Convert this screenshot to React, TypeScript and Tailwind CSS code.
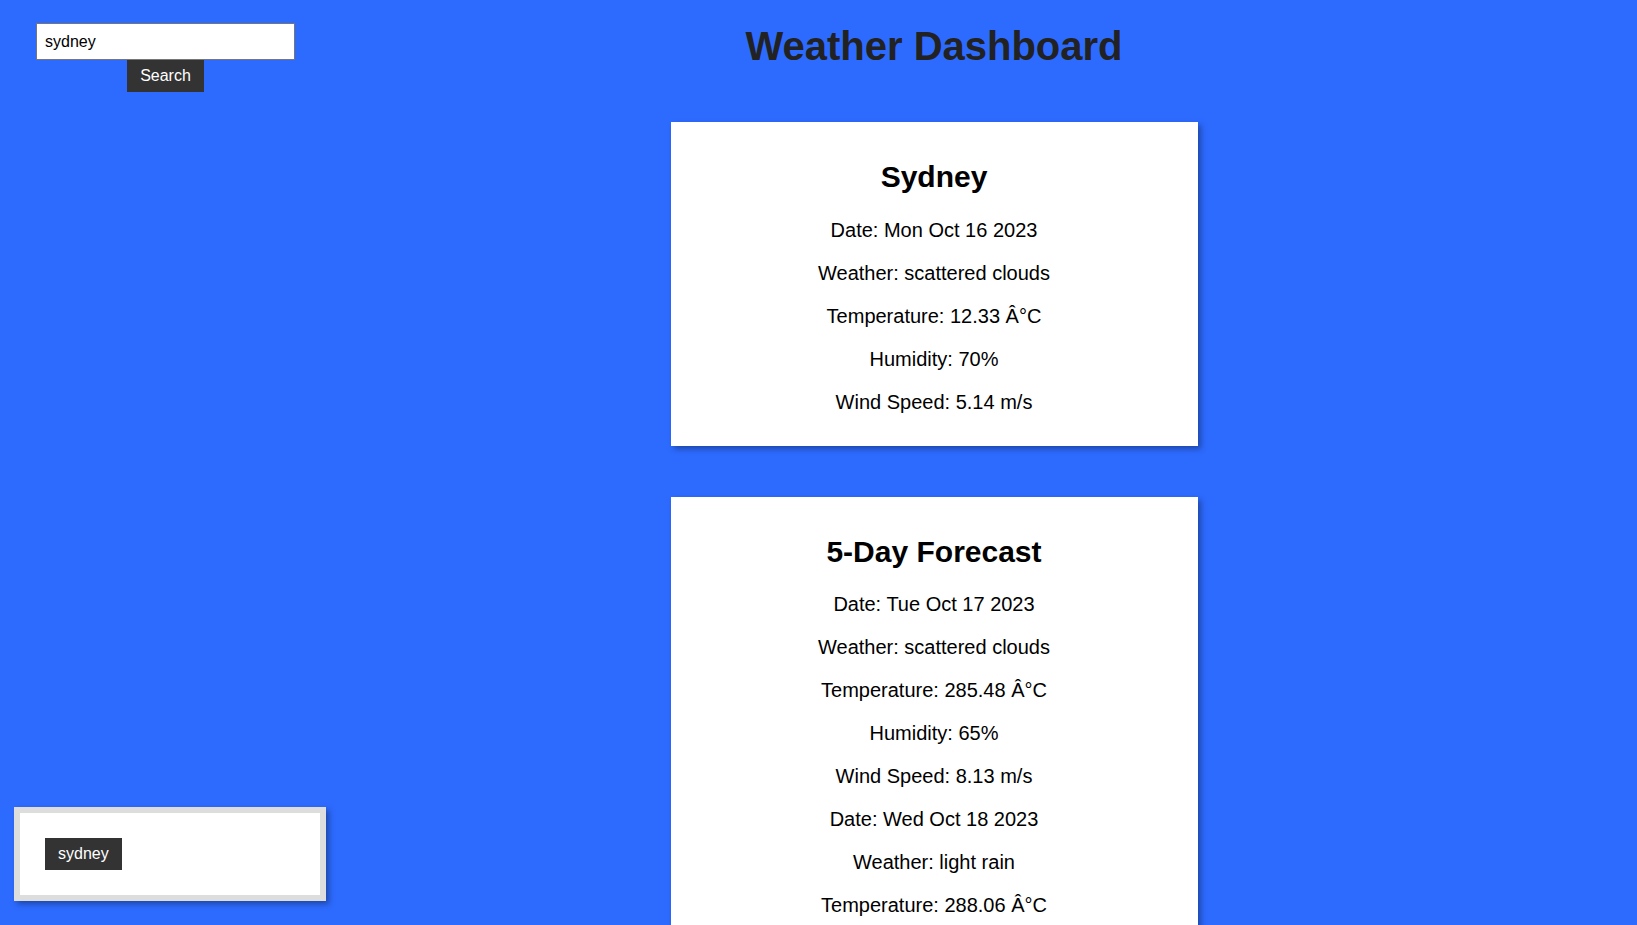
import React, { useState } from "react";

interface DayWeather {
  date: string;
  weather: string;
  temp: string;
  humidity: string;
  wind: string;
}

const current: DayWeather = {
  date: "Mon Oct 16 2023",
  weather: "scattered clouds",
  temp: "12.33",
  humidity: "70",
  wind: "5.14",
};

const forecast: DayWeather[] = [
  { date: "Tue Oct 17 2023", weather: "scattered clouds", temp: "285.48", humidity: "65", wind: "8.13" },
  { date: "Wed Oct 18 2023", weather: "light rain", temp: "288.06", humidity: "72", wind: "6.41" },
  { date: "Thu Oct 19 2023", weather: "overcast clouds", temp: "289.12", humidity: "68", wind: "4.37" },
  { date: "Fri Oct 20 2023", weather: "clear sky", temp: "291.55", humidity: "54", wind: "5.02" },
  { date: "Sat Oct 21 2023", weather: "few clouds", temp: "290.73", humidity: "60", wind: "7.28" },
];

const DayLines: React.FC<{ day: DayWeather }> = ({ day }) => (
  <>
    <p>Date: {day.date}</p>
    <p>Weather: {day.weather}</p>
    <p>Temperature: {day.temp} Â°C</p>
    <p>Humidity: {day.humidity}%</p>
    <p>Wind Speed: {day.wind} m/s</p>
  </>
);

const Card: React.FC<{ title: string; children: React.ReactNode }> = ({ title, children }) => (
  <div className="mx-auto w-[527px] bg-white pt-[38px] pb-[32px] text-center text-black shadow-[3px_3px_6px_rgba(0,0,0,0.35)]">
    <h2 className="text-[30px] font-bold leading-[34.5px]">{title}</h2>
    <div className="mt-[24px] flex flex-col gap-[20px] text-[20px] leading-[23px]">{children}</div>
  </div>
);

export default function App() {
  const [query, setQuery] = useState("sydney");
  const [history] = useState<string[]>(["sydney"]);

  return (
    <div
      className="flex h-screen overflow-hidden bg-[#2d6bff]"
      style={{ fontFamily: '"Liberation Sans", Arial, sans-serif' }}
    >
      {/* sidebar: search on top, history at the bottom */}
      <aside className="flex h-[925px] w-[331px] shrink-0 flex-col justify-between">
        <div className="flex w-[295px] flex-col items-center pl-[36px] pt-[23px]">
          <input
            value={query}
            onChange={(e) => setQuery(e.target.value)}
            className="h-[37px] w-[259px] border border-[#767676] bg-white px-[8px] text-[16px] text-black outline-none"
          />
          <button className="bg-[#333333] px-[13px] py-[7px] text-[16px] leading-[18px] text-white">
            Search
          </button>
        </div>
        <div className="mb-[24px] ml-[14px] w-[312px] border-[6px] border-[#dddddd] bg-white p-[25px] shadow-[3px_3px_6px_rgba(0,0,0,0.35)]">
          {history.map((city) => (
            <button
              key={city}
              className="block h-[32px] bg-[#333333] px-[13px] text-[16px] leading-[32px] text-white"
            >
              {city}
            </button>
          ))}
        </div>
      </aside>

      <main className="flex-1 pr-[100px]">
        <h1 className="mt-[23px] text-center text-[40px] font-bold leading-[46px] text-[#222222]">
          Weather Dashboard
        </h1>

        <div className="mt-[53px] flex flex-col gap-[51px]">
          <Card title="Sydney">
            <DayLines day={current} />
          </Card>

          <Card title="5-Day Forecast">
            {forecast.map((d) => (
              <DayLines key={d.date} day={d} />
            ))}
          </Card>
        </div>
      </main>
    </div>
  );
}
